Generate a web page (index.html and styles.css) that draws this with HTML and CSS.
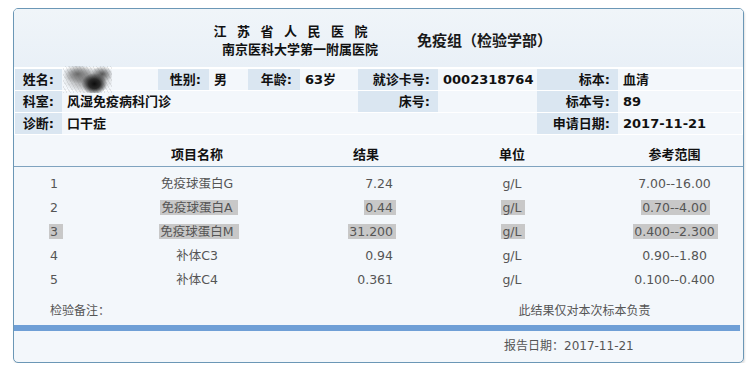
FILE: index.html
```html
<!DOCTYPE html>
<html lang="zh-CN">
<head>
<meta charset="utf-8">
<title>检验报告单</title>
<link rel="stylesheet" href="styles.css">
</head>
<body>
<div class="report">
  <header class="report-head">
    <div class="hosp">
      <div class="hosp-name">江苏省人民医院</div>
      <div class="hosp-sub">南京医科大学第一附属医院</div>
    </div>
    <div class="dept">免疫组（检验学部）</div>
  </header>

  <div class="info">
    <div class="lbl">姓名:</div><div class="val val-photo"><span class="blur"></span></div>
    <div class="lbl">性别:</div><div class="val">男</div>
    <div class="lbl">年龄:</div><div class="val">63岁</div>
    <div class="lbl">就诊卡号:</div><div class="val">0002318764</div>
    <div class="lbl">标本:</div><div class="val">血清</div>

    <div class="lbl">科室:</div><div class="val span-5">风湿免疫病科门诊</div>
    <div class="lbl">床号:</div><div class="val"></div>
    <div class="lbl">标本号:</div><div class="val">89</div>

    <div class="lbl">诊断:</div><div class="val span-7">口干症</div>
    <div class="lbl">申请日期:</div><div class="val">2017-11-21</div>
  </div>

  <div class="results">
    <div class="row thead">
      <div class="c-no"></div>
      <div class="c-name">项目名称</div>
      <div class="c-res">结果</div>
      <div class="c-unit">单位</div>
      <div class="c-ref">参考范围</div>
    </div>
    <div class="tbody">
      <div class="row">
        <div class="c-no">1</div>
        <div class="c-name">免疫球蛋白G</div>
        <div class="c-res">7.24</div>
        <div class="c-unit">g/L</div>
        <div class="c-ref">7.00--16.00</div>
      </div>
      <div class="row">
        <div class="c-no">2</div>
        <div class="c-name"><span class="sel sel-wide">免疫球蛋白A</span></div>
        <div class="c-res"><span class="sel">0.44</span></div>
        <div class="c-unit"><span class="sel">g/L</span></div>
        <div class="c-ref"><span class="sel">0.70--4.00</span></div>
      </div>
      <div class="row">
        <div class="c-no"><span class="sel sel-wide">3</span></div>
        <div class="c-name"><span class="sel sel-wide">免疫球蛋白M</span></div>
        <div class="c-res"><span class="sel">31.200</span></div>
        <div class="c-unit"><span class="sel">g/L</span></div>
        <div class="c-ref"><span class="sel">0.400--2.300</span></div>
      </div>
      <div class="row">
        <div class="c-no">4</div>
        <div class="c-name">补体C3</div>
        <div class="c-res">0.94</div>
        <div class="c-unit">g/L</div>
        <div class="c-ref">0.90--1.80</div>
      </div>
      <div class="row">
        <div class="c-no">5</div>
        <div class="c-name">补体C4</div>
        <div class="c-res">0.361</div>
        <div class="c-unit">g/L</div>
        <div class="c-ref">0.100--0.400</div>
      </div>
    </div>
  </div>

  <div class="remark">
    <div class="remark-label">检验备注：</div>
    <div class="remark-note">此结果仅对本次标本负责</div>
  </div>
  <div class="bar"></div>
  <div class="report-date">报告日期：2017-11-21</div>
</div>
</body>
</html>
```

FILE: styles.css
```css
html, body {
  margin: 0;
  padding: 0;
  background: #ffffff;
}

body {
  font-family: "DejaVu Sans", "Noto Sans CJK SC", sans-serif;
  color: #111;
}

.report {
  margin: 8px 0 0 13px;
  width: 731px;
  box-sizing: border-box;
  border: 1px solid #6b97b6;
  border-radius: 5px;
  background: #f3f7fb;
  box-shadow: 1px 2px 2px rgba(0, 0, 0, 0.12);
  overflow: hidden;
}

/* ---------- header ---------- */
.report-head {
  display: flex;
  align-items: center;
  padding: 14px 0 8px;
  border-bottom: 1px solid #ffffff;
  background: linear-gradient(#f0f5f9, #e9f0f7);
}

.hosp {
  width: 364px;
  text-align: right;
  font-weight: bold;
  font-size: 13px;
  line-height: 18px;
  color: #111;
}

.hosp-name {
  letter-spacing: 10.5px;
}

.dept {
  margin-left: 39px;
  font-size: 15px;
  font-weight: bold;
  line-height: 18px;
  color: #1a1a1a;
}

/* ---------- patient info ---------- */
.info {
  display: grid;
  grid-template-columns: 47px 96px 51px 39px 52px 58px 80px 99px 81px 1fr;
  row-gap: 1px;
  padding: 1px;
  background: #ffffff;
}

.info > div {
  box-sizing: border-box;
  height: 21px;
  line-height: 21px;
  font-size: 13px;
  font-weight: bold;
  color: #111;
  white-space: nowrap;
}

.lbl {
  background: #dae6f1;
  text-align: right;
  padding-right: 8px;
}

.val {
  background: #f3f7fb;
  padding-left: 5px;
}

.span-5 { grid-column: span 5; }
.span-7 { grid-column: span 7; }

.val-photo {
  display: flex;
  align-items: center;
  padding-left: 1px;
}

.blur {
  flex: none;
  width: 49px;
  height: 27px;
  margin: -3px 0;
  background:
    radial-gradient(ellipse 26% 40% at 64% 66%, #0d0d0d 0%, #2a2a2a 45%, rgba(60, 60, 60, 0) 100%),
    radial-gradient(ellipse 30% 35% at 30% 30%, #6a6a6a 0%, rgba(110, 110, 110, 0.5) 55%, rgba(160, 160, 160, 0) 100%),
    radial-gradient(ellipse 22% 30% at 80% 30%, #555 0%, rgba(120, 120, 120, 0) 100%),
    radial-gradient(ellipse 52% 50% at 52% 52%, rgba(100, 100, 100, 0.85) 0%, rgba(150, 150, 150, 0.5) 60%, rgba(220, 220, 220, 0) 100%),
    repeating-linear-gradient(60deg, rgba(0, 0, 0, 0.08) 0 1px, rgba(255, 255, 255, 0) 1px 3px);
  filter: blur(0.6px);
}

/* ---------- results table ---------- */
.row {
  display: grid;
  grid-template-columns: 80px 206px 132px 160px 1fr;
}

.row > div {
  text-align: center;
  white-space: nowrap;
}

.c-ref {
  padding-left: 14px;
}

.thead {
  padding: 11px 0 2px;
  border-bottom: 1px solid #7fa3bf;
  font-size: 13px;
  font-weight: bold;
  line-height: 18px;
  color: #111;
}

.tbody {
  padding-top: 5px;
}

.tbody .row {
  height: 24px;
  line-height: 24px;
  font-size: 12.5px;
  color: #555;
}

.tbody .c-res {
  text-align: right;
  padding-right: 39px;
}

.sel {
  background: #c8c8c8;
  padding: 0 3px 0 1px;
  margin: 0 -3px 0 -1px;
}

.sel-wide {
  padding-right: 5px;
  margin-right: -5px;
}

/* ---------- footer ---------- */
.remark {
  display: flex;
  padding: 10px 0 5px;
  line-height: 18px;
  font-size: 12px;
  color: #555;
}

.remark-label {
  width: 418px;
  box-sizing: border-box;
  padding-left: 36px;
}

.remark-note {
  flex: 1;
  text-align: center;
  padding-right: 6px;
}

.bar {
  height: 6px;
  margin-right: 3px;
  background: #6f9fd6;
}

.report-date {
  padding: 6px 0 7px 490px;
  line-height: 18px;
  font-size: 12px;
  color: #555;
}
```
